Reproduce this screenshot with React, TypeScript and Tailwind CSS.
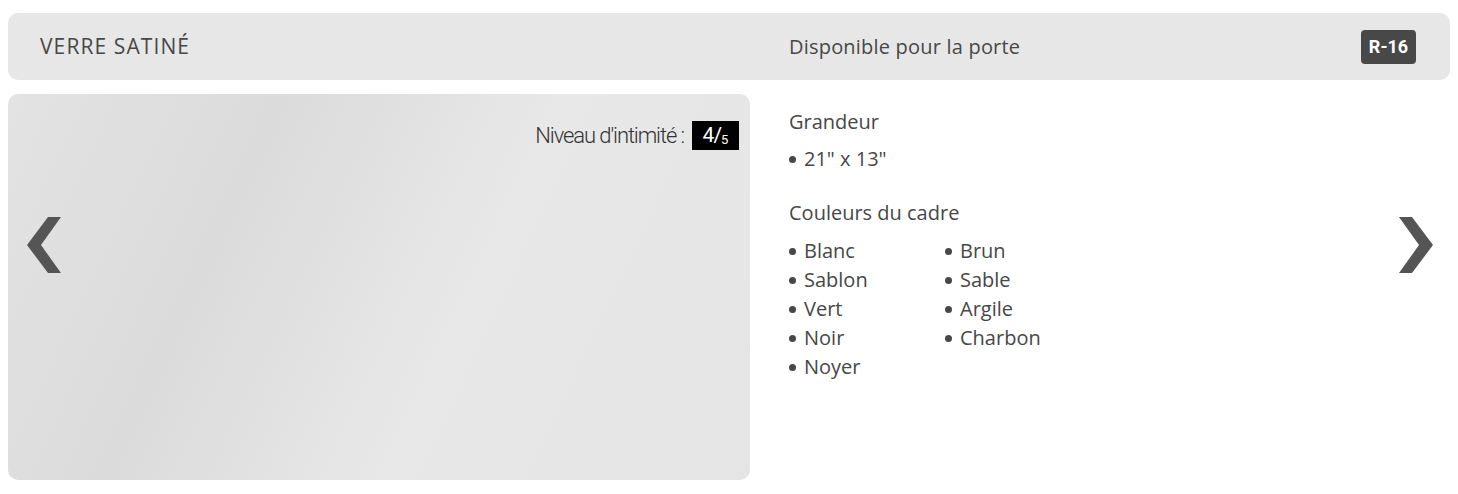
import React from 'react'

const couleurs = [
  ['Blanc', 'Brun'],
  ['Sablon', 'Sable'],
  ['Vert', 'Argile'],
  ['Noir', 'Charbon'],
  ['Noyer', ''],
]

function Puce({ children }: any) {
  return (
    <div className="flex items-center">
      <span className="inline-block w-[7px] h-[7px] rounded-full bg-[#474747] mr-[8px] mt-[2px]" />
      {children}
    </div>
  )
}

export default function App() {
  return (
    <div className="relative bg-white w-[1458px] h-[494px] px-2 pt-[13px] font-['Open_Sans','Noto_Sans',sans-serif] text-[#474747]">
      {/* BARRE DU HAUT */}
      <div className="flex items-center h-[67px] rounded-[10px] bg-[#e7e7e7]">
        <div className="w-[781px] pl-8 text-[21px] tracking-[1.1px]">VERRE SATINÉ</div>
        <div className="flex-1 text-[20px] tracking-[0.2px]">Disponible pour la porte</div>
        <span className="mr-[34px] flex items-center justify-center w-[55px] h-[34px] rounded-[4px] bg-[#484848] text-white text-[18px] font-bold font-['Roboto',sans-serif]">
          R-16
        </span>
      </div>

      {/* CONTENU */}
      <div className="flex mt-[14px]">
        <div className="relative w-[742px] h-[386px] rounded-[10px] bg-[linear-gradient(115deg,#e4e3e3_0%,#dcdbdb_30%,#e8e8e8_60%,#e5e5e5_100%)]">
          <div className="absolute right-[11px] top-[25px] flex items-center gap-[8px]">
            <span className="font-['Roboto',sans-serif] font-light text-[22px] tracking-[-1.1px] text-[#333]">
              Niveau d'intimité :
            </span>
            <span className="flex items-end justify-center w-[47px] h-[29px] bg-black text-white font-['Roboto',sans-serif] pb-[4px]">
              <span className="text-[21px] leading-none tracking-[-1px]">4/</span>
              <span className="text-[13px] leading-none">5</span>
            </span>
          </div>
        </div>

        <div className="pl-[39px] pt-[13px] text-[20px] leading-[29px]">
          <div>Grandeur</div>
          <div className="mt-2">
            <Puce>21" x 13"</Puce>
          </div>
          <div className="mt-[25px]">Couleurs du cadre</div>
          <div className="mt-[9px] grid grid-cols-[156px_156px]">
            {couleurs.map(([a, b]) => (
              <React.Fragment key={a}>
                <Puce>{a}</Puce>
                <div>{b ? <Puce>{b}</Puce> : null}</div>
              </React.Fragment>
            ))}
          </div>
        </div>
      </div>

      {/* FLÈCHES */}
      <svg className="absolute left-[26px] top-[216px]" width="36" height="58" viewBox="0 0 36 58">
        <polygon points="1,29 22,1 35,1 15,29 35,57 22,57" fill="#555555" />
      </svg>
      <svg className="absolute left-[1398px] top-[216px]" width="36" height="58" viewBox="0 0 36 58">
        <polygon points="35,29 14,1 1,1 21,29 1,57 14,57" fill="#555555" />
      </svg>
    </div>
  )
}
